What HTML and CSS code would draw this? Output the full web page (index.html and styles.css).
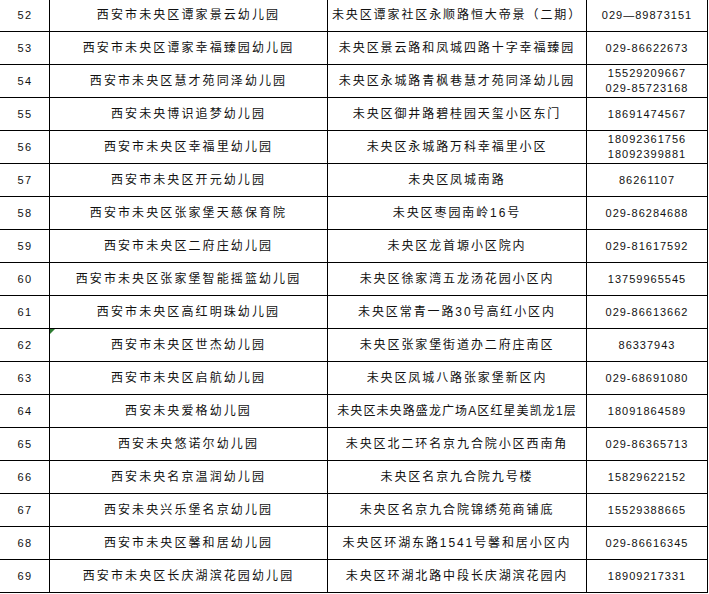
FILE: index.html
```html
<!DOCTYPE html>
<html lang="zh-CN">
<head>
<meta charset="utf-8">
<title>幼儿园名单</title>
<link rel="stylesheet" href="styles.css">
</head>
<body>
<div class="sheet">
  <div class="c num">52</div><div class="c name">西安市未央区谭家景云幼儿园</div><div class="c addr">未央区谭家社区永顺路恒大帝景（二期）</div><div class="c tel">029—89873151</div>
  <div class="c num">53</div><div class="c name">西安市未央区谭家幸福臻园幼儿园</div><div class="c addr">未央区景云路和凤城四路十字幸福臻园</div><div class="c tel">029-86622673</div>
  <div class="c num">54</div><div class="c name">西安市未央区慧才苑同泽幼儿园</div><div class="c addr">未央区永城路青枫巷慧才苑同泽幼儿园</div><div class="c tel two"><span>15529209667</span><span>029-85723168</span></div>
  <div class="c num">55</div><div class="c name">西安未央博识追梦幼儿园</div><div class="c addr">未央区御井路碧桂园天玺小区东门</div><div class="c tel">18691474567</div>
  <div class="c num">56</div><div class="c name">西安市未央区幸福里幼儿园</div><div class="c addr">未央区永城路万科幸福里小区</div><div class="c tel two"><span>18092361756</span><span>18092399881</span></div>
  <div class="c num">57</div><div class="c name">西安市未央区开元幼儿园</div><div class="c addr">未央区凤城南路</div><div class="c tel">86261107</div>
  <div class="c num">58</div><div class="c name">西安市未央区张家堡天慈保育院</div><div class="c addr">未央区枣园南岭16号</div><div class="c tel">029-86284688</div>
  <div class="c num">59</div><div class="c name">西安市未央区二府庄幼儿园</div><div class="c addr">未央区龙首塬小区院内</div><div class="c tel">029-81617592</div>
  <div class="c num">60</div><div class="c name">西安市未央区张家堡智能摇篮幼儿园</div><div class="c addr">未央区徐家湾五龙汤花园小区内</div><div class="c tel">13759965545</div>
  <div class="c num">61</div><div class="c name">西安市未央区高红明珠幼儿园</div><div class="c addr">未央区常青一路30号高红小区内</div><div class="c tel">029-86613662</div>
  <div class="c num">62</div><div class="c name flag">西安市未央区世杰幼儿园</div><div class="c addr">未央区张家堡街道办二府庄南区</div><div class="c tel">86337943</div>
  <div class="c num">63</div><div class="c name">西安市未央区启航幼儿园</div><div class="c addr">未央区凤城八路张家堡新区内</div><div class="c tel">029-68691080</div>
  <div class="c num">64</div><div class="c name">西安未央爱格幼儿园</div><div class="c addr tight">未央区未央路盛龙广场A区红星美凯龙1层</div><div class="c tel">18091864589</div>
  <div class="c num">65</div><div class="c name">西安未央悠诺尔幼儿园</div><div class="c addr">未央区北二环名京九合院小区西南角</div><div class="c tel">029-86365713</div>
  <div class="c num">66</div><div class="c name">西安未央名京温润幼儿园</div><div class="c addr">未央区名京九合院九号楼</div><div class="c tel">15829622152</div>
  <div class="c num">67</div><div class="c name">西安未央兴乐堡名京幼儿园</div><div class="c addr">未央区名京九合院锦绣苑商铺底</div><div class="c tel">15529388665</div>
  <div class="c num">68</div><div class="c name">西安市未央区馨和居幼儿园</div><div class="c addr">未央区环湖东路1541号馨和居小区内</div><div class="c tel">029-86616345</div>
  <div class="c num">69</div><div class="c name">西安市未央区长庆湖滨花园幼儿园</div><div class="c addr">未央区环湖北路中段长庆湖滨花园内</div><div class="c tel">18909217331</div>
</div>
</body>
</html>
```
FILE: styles.css
```css
html, body {
  margin: 0;
  padding: 0;
  background: #ffffff;
}
body {
  overflow: hidden;
  font-family: "Liberation Sans", "Noto Sans CJK SC", sans-serif;
  color: #111111;
}
.sheet {
  margin: -2px 0 0 -2px;
  display: grid;
  grid-template-columns: 51px 278px 259px 121px;
  grid-auto-rows: 33px;
  border-top: 1px solid #000;
  border-left: 1px solid #000;
  width: max-content;
}
.c {
  box-sizing: border-box;
  border-right: 1px solid #000;
  border-bottom: 1px solid #000;
  display: flex;
  align-items: center;
  justify-content: center;
  font-size: 12px;
  line-height: 14px;
  white-space: nowrap;
  overflow: hidden;
  position: relative;
}
.num {
  font-size: 11px;
  letter-spacing: 1.5px;
  padding-left: 2px;
}
.name {
  letter-spacing: 2.1px;
}
.addr {
  letter-spacing: 1.9px;
}
.addr.tight {
  letter-spacing: 1.1px;
}
.tel {
  font-size: 11px;
  letter-spacing: 1px;
}
.tel.two {
  flex-direction: column;
  line-height: 15px;
}
.flag::before {
  content: "";
  position: absolute;
  left: 0;
  top: 0;
  width: 0;
  height: 0;
  border-top: 5px solid #2e7d32;
  border-right: 5px solid transparent;
}
```
